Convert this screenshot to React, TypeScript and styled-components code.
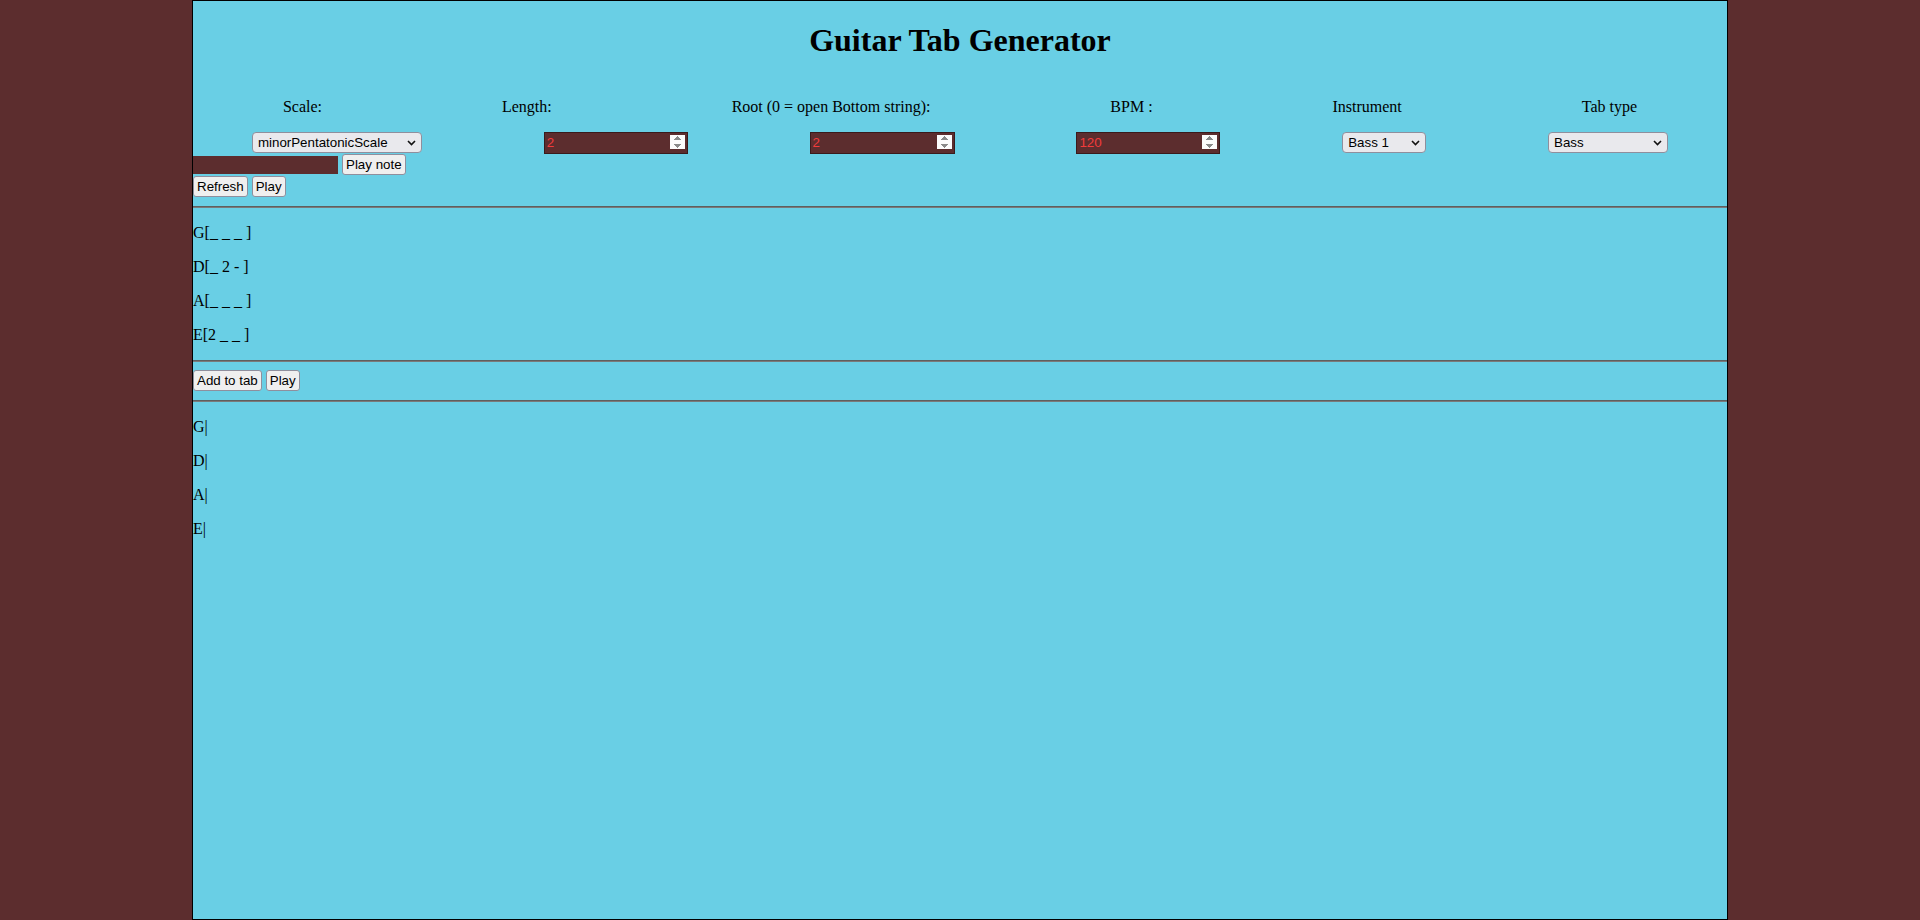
import React from "react";
import styled, { createGlobalStyle } from "styled-components";

const GlobalStyle = createGlobalStyle`
  html, body {
    margin: 0;
    padding: 0;
  }
  body {
    background: #5c2d2e;
    font-family: "Liberation Serif", "Times New Roman", serif;
    font-size: 16px;
    color: #000;
  }
`;

const Page = styled.div`
  width: 80%;
  height: 100vh;
  box-sizing: border-box;
  margin: 0 auto;
  border: 1px solid #000;
  background: #69cfe5;
  overflow: hidden;
`;

const Title = styled.h1`
  margin: 21.44px 0;
  font-size: 32px;
  font-weight: bold;
  text-align: center;
`;

const LabelRow = styled.div`
  display: flex;
  justify-content: space-around;
  padding-top: 1px;
`;

const Label = styled.p`
  margin: 16px 0;
  font-size: 16px;
`;

const Row = styled.div<{ $spread?: boolean }>`
  display: flex;
  align-items: center;
  height: 22px;
  gap: 4px;
  justify-content: ${(p) => (p.$spread ? "space-around" : "flex-start")};
`;

const controlFont = `
  font-family: "Liberation Sans", Arial, sans-serif;
  font-size: 13.333px;
`;

const SelectWrap = styled.div<{ $w: number }>`
  position: relative;
  display: inline-block;
  width: ${(p) => p.$w}px;
  height: 21px;
`;

const Select = styled.select`
  ${controlFont}
  appearance: none;
  -webkit-appearance: none;
  width: 100%;
  height: 100%;
  box-sizing: border-box;
  padding: 0 20px 0 5px;
  color: #000;
  background: #e9e9ed;
  border: 1px solid #8f8f9d;
  border-radius: 4px;
  outline: none;
`;

const Chevron = styled.svg`
  position: absolute;
  right: 6px;
  top: 8px;
  width: 9px;
  height: 6px;
  pointer-events: none;
`;

const NumberInput = styled.input<{ $w?: number }>`
  ${controlFont}
  width: ${(p) => p.$w ?? 145}px;
  height: 22px;
  box-sizing: border-box;
  padding: 1px 2px;
  border: 1px solid #3a1b1c;
  background: #5c2d2e;
  color: #f23b3b;
  outline: none;
  &::-webkit-inner-spin-button,
  &::-webkit-outer-spin-button {
    opacity: 1;
  }
`;

const NoteInput = styled.input`
  ${controlFont}
  width: 145px;
  height: 18px;
  box-sizing: border-box;
  padding: 1px 2px;
  border: none;
  background: #5c2d2e;
  color: #f23b3b;
  outline: none;
`;

const Button = styled.button`
  ${controlFont}
  height: 21px;
  box-sizing: border-box;
  padding: 1px 3px;
  color: #000;
  background: #efefef;
  border: 1px solid #8f8f9d;
  border-radius: 3px;
`;

const Rule = styled.hr`
  margin: 8px 0;
  height: 0;
  border: none;
  border-top: 1px solid #5f5f5f;
  border-bottom: 1px solid #7a7a7a;
`;

const TabLine = styled.p`
  margin: 16px 0;
  white-space: pre;
`;

const strings = ["G", "D", "A", "E"];
const pattern = ["[_ _ _ ]", "[_ 2 - ]", "[_ _ _ ]", "[2 _ _ ]"];

function Dropdown({ w, value, options }: { w: number; value: string; options: string[] }) {
  return (
    <SelectWrap $w={w}>
      <Select defaultValue={value}>
        {options.map((o) => (
          <option key={o} value={o}>
            {o}
          </option>
        ))}
      </Select>
      <Chevron viewBox="0 0 9 6">
        <path d="M1 1 L4.5 4.5 L8 1" fill="none" stroke="#111" strokeWidth="1.6" />
      </Chevron>
    </SelectWrap>
  );
}

export default function App() {
  return (
    <>
      <GlobalStyle />
      <Page>
        <Title>Guitar Tab Generator</Title>
        <LabelRow>
          <Label>Scale:</Label>
          <Label>Length:</Label>
          <Label>Root (0 = open Bottom string):</Label>
          <Label>BPM :</Label>
          <Label>Instrument</Label>
          <Label>Tab type</Label>
        </LabelRow>
        <Row $spread>
          <Dropdown w={170} value="minorPentatonicScale" options={["minorPentatonicScale", "majorScale"]} />
          <NumberInput type="number" defaultValue={2} $w={144} />
          <NumberInput type="number" defaultValue={2} $w={145} />
          <NumberInput type="number" defaultValue={120} $w={144} />
          <Dropdown w={84} value="Bass 1" options={["Bass 1", "Bass 2"]} />
          <Dropdown w={120} value="Bass" options={["Bass", "Guitar"]} />
        </Row>
        <Row>
          <NoteInput type="text" />
          <Button>Play note</Button>
        </Row>
        <Row>
          <Button>Refresh</Button>
          <Button>Play</Button>
        </Row>
        <Rule />
        {strings.map((s, i) => (
          <TabLine key={s}>
            {s}
            {pattern[i]}
          </TabLine>
        ))}
        <Rule />
        <Row>
          <Button>Add to tab</Button>
          <Button>Play</Button>
        </Row>
        <Rule />
        {strings.map((s) => (
          <TabLine key={s}>{s}|</TabLine>
        ))}
      </Page>
    </>
  );
}
